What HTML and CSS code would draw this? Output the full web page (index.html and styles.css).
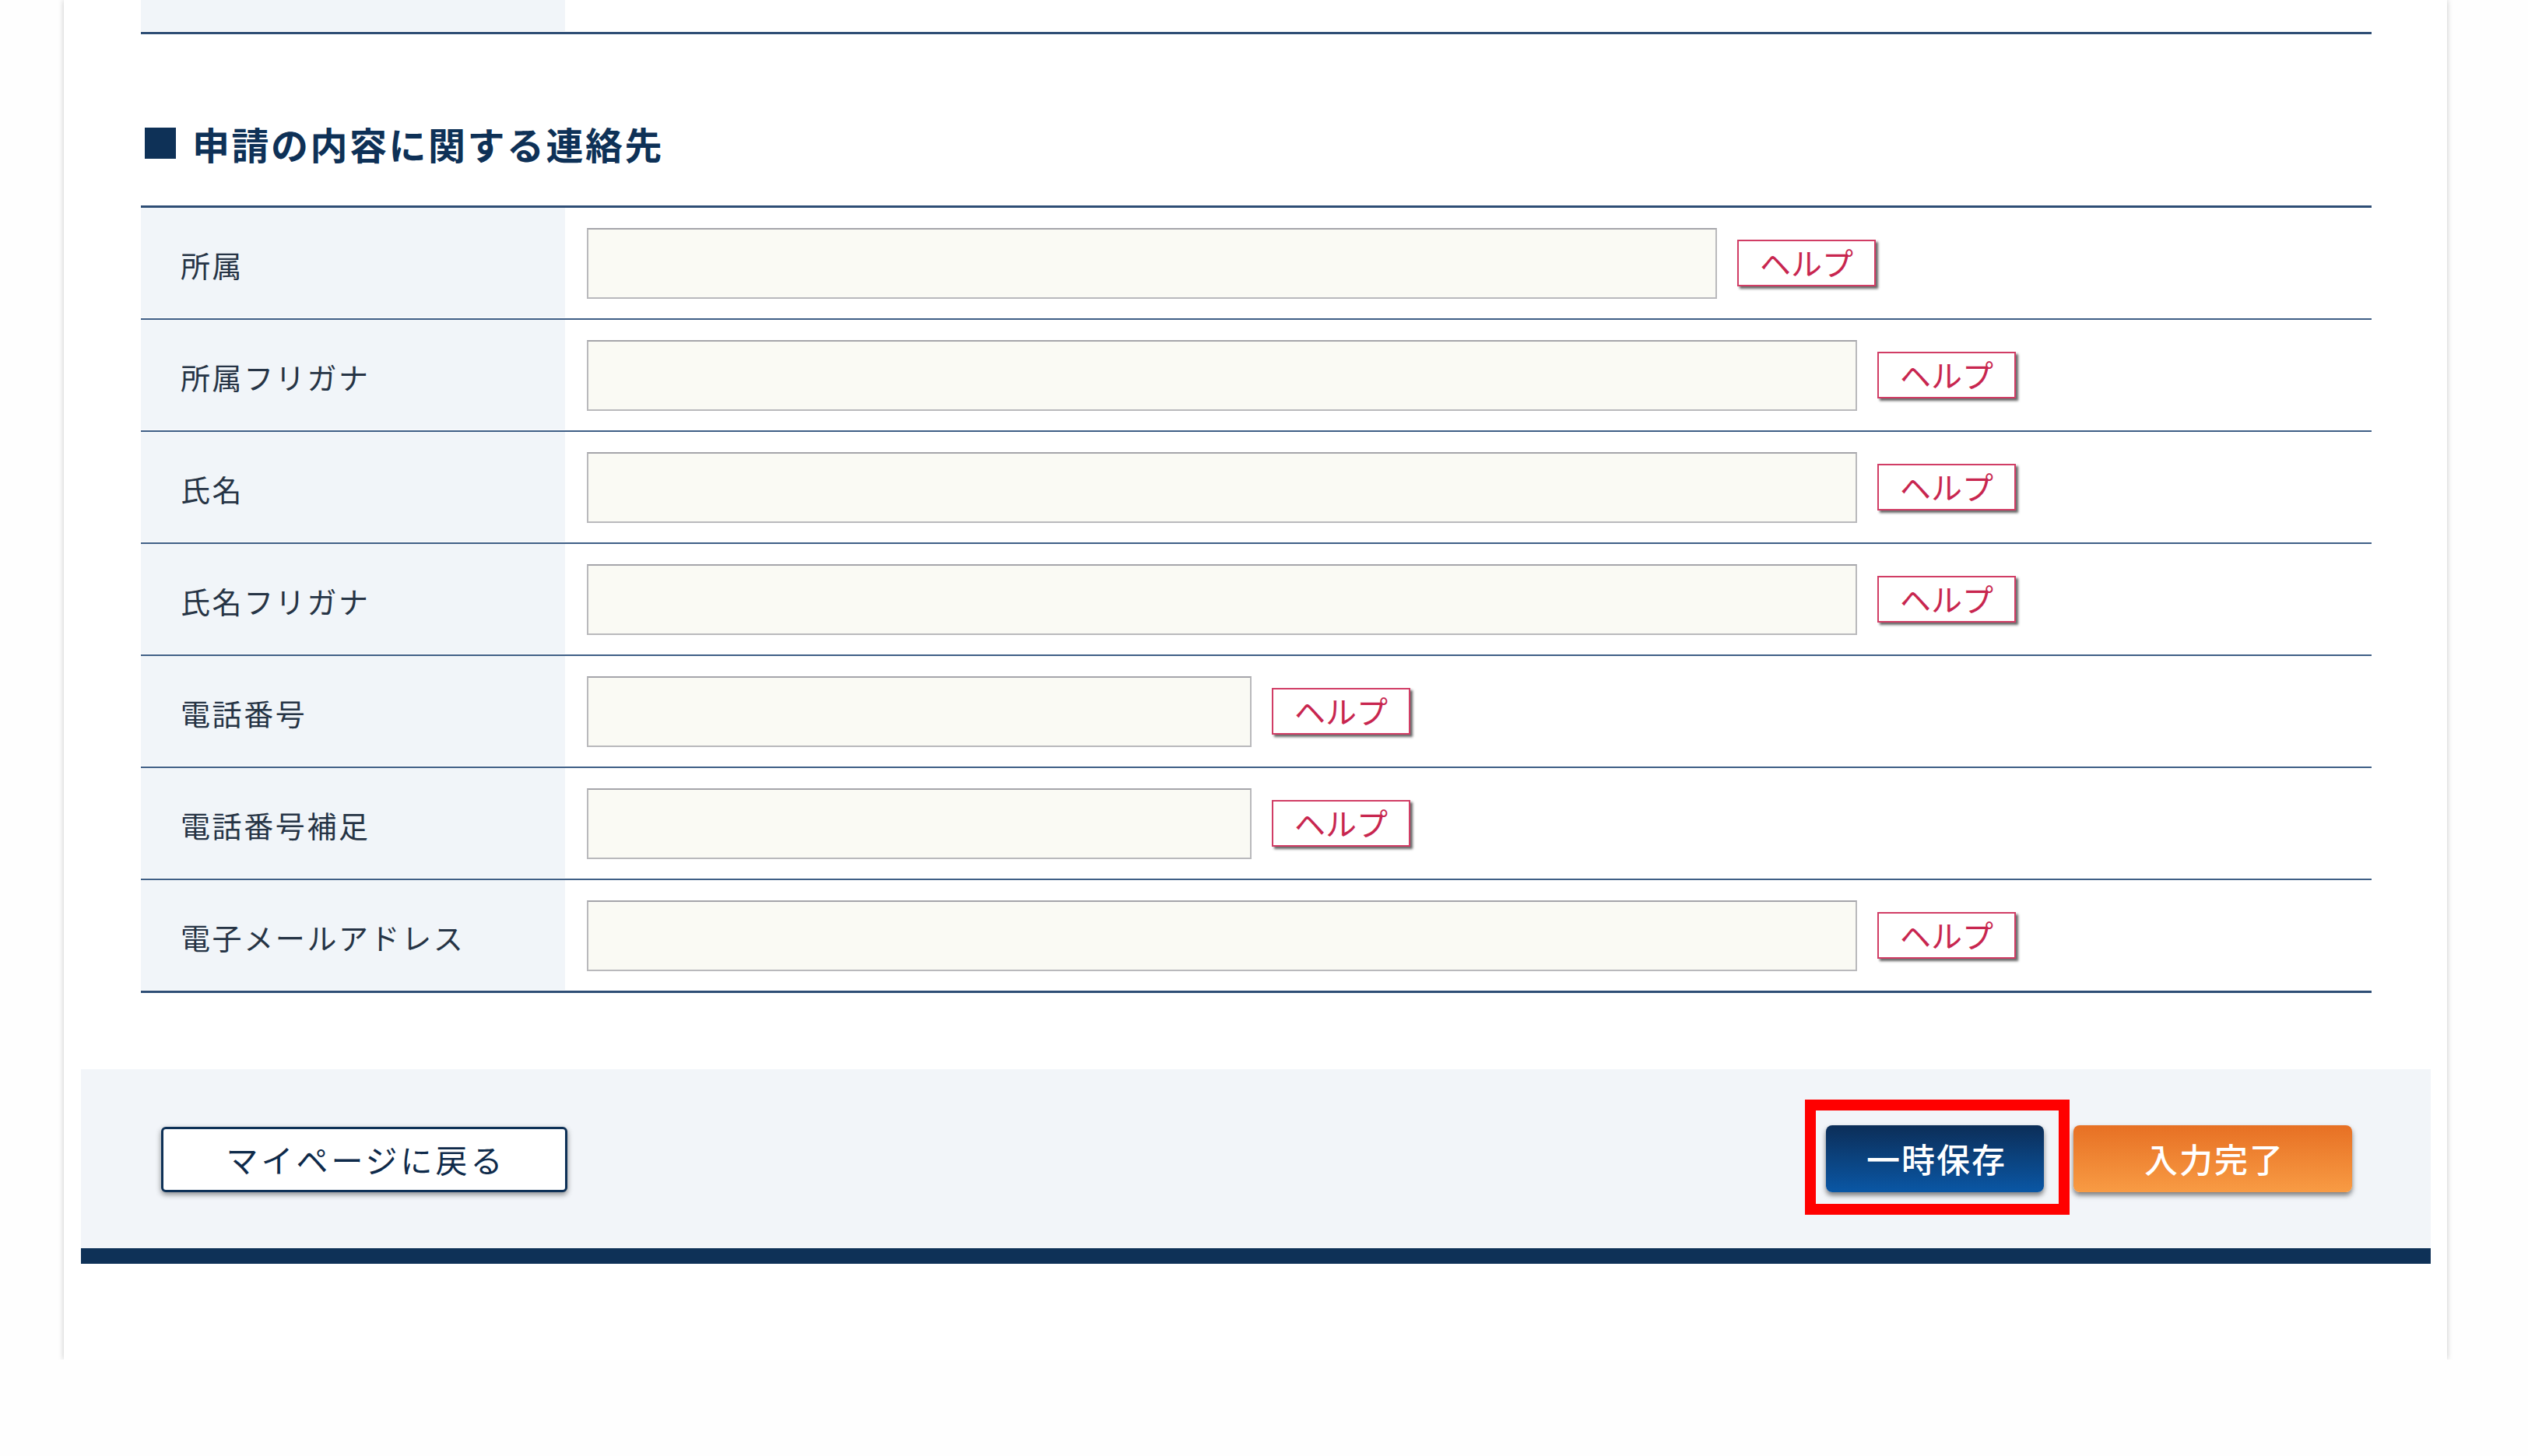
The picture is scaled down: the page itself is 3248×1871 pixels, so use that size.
FILE: index.html
```html
<!DOCTYPE html>
<html lang="ja">
<head>
<meta charset="utf-8">
<title>申請の内容に関する連絡先</title>
<link rel="stylesheet" href="styles.css">
</head>
<body>
<div class="card">
  <div class="section">
    <div class="prev-row"><div class="prev-label"></div><div class="prev-value"></div></div>
    <h2 class="heading">申請の内容に関する連絡先</h2>
    <div class="form-table">
      <div class="row">
        <div class="label">所属</div>
        <div class="value"><input class="field w-l" type="text"><button class="help" type="button">ヘルプ</button></div>
      </div>
      <div class="row">
        <div class="label">所属フリガナ</div>
        <div class="value"><input class="field w-xl" type="text"><button class="help" type="button">ヘルプ</button></div>
      </div>
      <div class="row">
        <div class="label">氏名</div>
        <div class="value"><input class="field w-xl" type="text"><button class="help" type="button">ヘルプ</button></div>
      </div>
      <div class="row">
        <div class="label">氏名フリガナ</div>
        <div class="value"><input class="field w-xl" type="text"><button class="help" type="button">ヘルプ</button></div>
      </div>
      <div class="row">
        <div class="label">電話番号</div>
        <div class="value"><input class="field w-s" type="text"><button class="help" type="button">ヘルプ</button></div>
      </div>
      <div class="row">
        <div class="label">電話番号補足</div>
        <div class="value"><input class="field w-s" type="text"><button class="help" type="button">ヘルプ</button></div>
      </div>
      <div class="row last">
        <div class="label">電子メールアドレス</div>
        <div class="value"><input class="field w-xl" type="text"><button class="help" type="button">ヘルプ</button></div>
      </div>
    </div>
  </div>
  <div class="footer">
    <button class="btn btn-back" type="button">マイページに戻る</button>
    <div class="actions">
      <span class="marked"><button class="btn btn-save" type="button">一時保存</button></span>
      <button class="btn btn-done" type="button">入力完了</button>
    </div>
  </div>
  <div class="footer-bar"></div>
</div>
</body>
</html>
```
FILE: styles.css
```css
html, body {
  margin: 0;
  padding: 0;
  background: #fefefe;
}
body {
  font-family: "Noto Sans CJK JP", "Noto Sans", sans-serif;
  color: #263445;
  overflow: hidden;
}
.card {
  margin-left: 82px;
  width: 3062px;
  background: #ffffff;
  box-shadow: 0 0 7px rgba(0, 0, 0, 0.22);
  padding-bottom: 123px;
}
.section {
  padding: 0 97px 0 99px;
}
.prev-row {
  display: grid;
  grid-template-columns: 545px 1fr;
  height: 41px;
  border-bottom: 3px solid #2e4e75;
}
.prev-label {
  background: #f1f5f9;
  margin-bottom: 1px;
}
.heading {
  display: flex;
  align-items: center;
  margin: 104px 0 44px 5px;
  height: 72px;
  font-size: 48px;
  line-height: 72px;
  font-weight: 700;
  letter-spacing: 2.5px;
  color: #0e3157;
}
.heading::before {
  content: "";
  width: 40px;
  height: 40px;
  background: #0e3157;
  margin-right: 21px;
  flex: none;
}
.form-table {
  border-top: 3px solid #2e4e75;
}
.row {
  display: grid;
  grid-template-columns: 545px 1fr;
  height: 142px;
  border-bottom: 2px solid #3f5f86;
}
.row.last {
  border-bottom: 3px solid #2e4e75;
}
.label {
  background: #f1f5f9;
  display: flex;
  align-items: center;
  padding: 4px 0 0 51px;
  font-size: 38px;
  letter-spacing: 2.6px;
  color: #263445;
  margin-bottom: 1px;
}
.value {
  display: flex;
  align-items: center;
  padding-left: 28px;
}
.field {
  box-sizing: border-box;
  height: 91px;
  border: 2px solid #b9b9bc;
  border-top-color: #a5a5aa;
  background: #fafaf4;
  margin: 0;
  padding: 0 12px;
  font-family: inherit;
  font-size: 36px;
  outline: none;
}
.w-l { width: 1452px; }
.w-xl { width: 1632px; }
.w-s { width: 854px; }
.help {
  box-sizing: border-box;
  width: 178px;
  height: 60px;
  margin-left: 26px;
  border: 2px solid #d13d65;
  background: #ffffff;
  color: #c8264f;
  font-family: inherit;
  font-size: 40px;
  letter-spacing: 0;
  line-height: 1;
  padding: 0 0 3px 0;
  box-shadow: 3px 3px 3px rgba(0, 0, 0, 0.6);
  cursor: pointer;
}
.footer {
  margin: 98px 21px 0 22px;
  height: 230px;
  background: #f2f5f9;
  display: flex;
  align-items: center;
  justify-content: space-between;
  padding: 0 101px 0 103px;
}
.footer-bar {
  margin: 0 21px 0 22px;
  height: 20px;
  background: #0e3157;
}
.actions {
  display: flex;
  align-items: center;
  gap: 38px;
}
.btn {
  box-sizing: border-box;
  font-family: inherit;
  line-height: 1;
  cursor: pointer;
  padding: 0 0 2px 4px;
}
.btn-back {
  width: 522px;
  height: 84px;
  background: #ffffff;
  border: 3px solid #0e3157;
  border-radius: 6px;
  color: #0e2a4a;
  font-size: 41px;
  letter-spacing: 4px;
  box-shadow: 0 3px 7px rgba(0, 0, 0, 0.45);
  margin-top: 2px;
}
.btn-save,
.btn-done {
  height: 86px;
  border: none;
  border-radius: 8px;
  color: #ffffff;
  font-size: 43px;
  font-weight: 500;
  letter-spacing: 2px;
  box-shadow: 0 4px 6px rgba(0, 0, 0, 0.5);
}
.btn-save {
  width: 280px;
  background: linear-gradient(#0c2e58, #0a57a5);
}
.btn-done {
  width: 358px;
  background: linear-gradient(#e77024, #f89b44);
}
.marked {
  position: relative;
  display: flex;
}
.marked::after {
  content: "";
  position: absolute;
  left: -27px;
  right: -33px;
  top: -33px;
  bottom: -29px;
  border: 14px solid #ff0000;
  pointer-events: none;
}
```
